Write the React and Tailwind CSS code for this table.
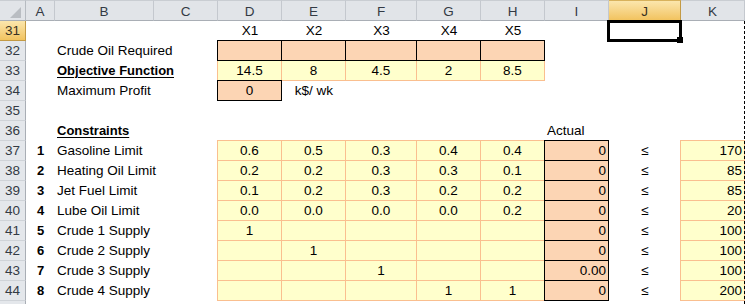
const COLS = ["A", "B", "C", "D", "E", "F", "G", "H", "I", "J", "K"];

const CONSTRAINTS = [
  { n: 1, name: "Gasoline Limit", vals: ["0.6", "0.5", "0.3", "0.4", "0.4"], actual: "0", limit: "170" },
  { n: 2, name: "Heating Oil Limit", vals: ["0.2", "0.2", "0.3", "0.3", "0.1"], actual: "0", limit: "85" },
  { n: 3, name: "Jet Fuel Limit", vals: ["0.1", "0.2", "0.3", "0.2", "0.2"], actual: "0", limit: "85" },
  { n: 4, name: "Lube Oil Limit", vals: ["0.0", "0.0", "0.0", "0.0", "0.2"], actual: "0", limit: "20" },
  { n: 5, name: "Crude 1 Supply", vals: ["1", "", "", "", ""], actual: "0", limit: "100" },
  { n: 6, name: "Crude 2 Supply", vals: ["", "1", "", "", ""], actual: "0", limit: "100" },
  { n: 7, name: "Crude 3 Supply", vals: ["", "", "1", "", ""], actual: "0.00", limit: "100" },
  { n: 8, name: "Crude 4 Supply", vals: ["", "", "", "1", "1"], actual: "0", limit: "200" },
];

// cell fills
const STYLES = {
  none: "",
  peach: "bg-[#fcd5b4] border border-black -mt-px -ml-px",
  yellow: "bg-[#ffffcc] border border-[#fabf8f] -mt-px -ml-px",
  yellowOpen: "bg-[#ffffcc] border-x border-b border-[#fabf8f] -ml-px",
};

const ALIGN = {
  left: "text-left pl-[2px]",
  center: "text-center",
  right: "text-right pr-[2px]",
};

const c = (t = "", s = "none", a = "center", extra = "") => ({ t, s, a, extra });
const blank = () => c();

function buildRows() {
  const rows = [];
  const empty = () => COLS.map(() => blank());

  // 31
  const r31 = empty();
  ["X1", "X2", "X3", "X4", "X5"].forEach((x, i) => (r31[3 + i] = c(x)));
  rows.push({ n: 31, cells: r31 });

  // 32
  const r32 = empty();
  r32[1] = c("Crude Oil Required", "none", "left");
  for (let i = 3; i <= 7; i++) r32[i] = c("", "peach");
  rows.push({ n: 32, cells: r32 });

  // 33
  const r33 = empty();
  r33[1] = c("Objective Function", "none", "left", "font-bold text-[13px] underline decoration-1 underline-offset-[2px]");
  ["14.5", "8", "4.5", "2", "8.5"].forEach((v, i) => (r33[3 + i] = c(v, "yellowOpen")));
  rows.push({ n: 33, cells: r33 });

  // 34
  const r34 = empty();
  r34[1] = c("Maximum Profit", "none", "left");
  r34[3] = c("0", "peach");
  r34[4] = c("k$/ wk");
  rows.push({ n: 34, cells: r34 });

  rows.push({ n: 35, cells: empty() });

  // 36
  const r36 = empty();
  r36[1] = c("Constraints", "none", "left", "font-bold text-[13px] underline decoration-1 underline-offset-[2px]");
  r36[8] = c("Actual", "none", "left");
  rows.push({ n: 36, cells: r36 });

  CONSTRAINTS.forEach((k, idx) => {
    const r = empty();
    r[0] = c(String(k.n), "none", "center", "font-bold text-[13px]");
    r[1] = c(k.name, "none", "left");
    k.vals.forEach((v, i) => (r[3 + i] = c(v, "yellow")));
    r[8] = c(k.actual, "peach", "right");
    r[9] = c("≤");
    r[10] = c(k.limit, "yellow", "right");
    rows.push({ n: 37 + idx, cells: r });
  });

  // last row only peeks in at the bottom edge, no label visible
  rows.push({ n: 45, cells: empty(), hideLabel: true });
  return rows;
}

function Cell({ cell }) {
  return (
    <div className={`min-w-0 whitespace-nowrap leading-[19px] text-black ${STYLES[cell.s]} ${ALIGN[cell.a]} ${cell.extra}`}>
      {cell.t}
    </div>
  );
}

export default function App() {
  const rows = buildRows();

  return (
    <div className="relative w-[746px] h-[304px] overflow-hidden bg-white font-['Liberation_Sans',Arial,sans-serif] text-[13.5px]">
      <div className="grid grid-cols-[26px_29px_99px_64px_64px_64px_71px_64px_64px_64px_72px_64px] grid-rows-[21px_repeat(15,20px)]">
        {/* corner */}
        <div className="relative bg-[#e1e4e8] border-t border-t-[#c9cdd2] border-r border-r-[#b6bbc1] border-b border-b-[#a9aeb5]">
          <svg className="absolute left-[10px] top-[6px]" width="11" height="11" viewBox="0 0 11 11">
            <polygon points="11,0 11,11 0,11" fill="#b9bdc2" />
          </svg>
        </div>

        {COLS.map((col) =>
          col === "J" ? (
            <div
              key={col}
              className="bg-linear-to-b from-[#fbe6ac] to-[#f2c35e] border-t border-t-[#d8b25c] border-r border-r-[#c39a45] border-b border-b-[#c39a45] text-center leading-[19px] pt-px text-[#3a3222]"
            >
              {col}
            </div>
          ) : (
            <div
              key={col}
              className="bg-[#e1e4e8] border-t border-t-[#c9cdd2] border-r border-r-[#c4c8ce] border-b border-b-[#a9aeb5] text-center leading-[19px] pt-px text-[#333a44]"
            >
              {col}
            </div>
          )
        )}

        {rows.map((row) => [
          <div
            key={`h${row.n}`}
            className={
              row.n === 31
                ? "bg-linear-to-b from-[#fbe6ac] to-[#f2c35e] border-r border-r-[#c39a45] border-b border-b-[#c39a45] text-center leading-[19px] text-[#3a3222]"
                : "bg-[#e4e7eb] border-r border-r-[#a9aeb5] border-b border-b-[#cfd3d8] text-center leading-[19px] text-[#333a44]"
            }
          >
            {row.hideLabel ? "" : row.n}
          </div>,
          ...row.cells.map((cell, i) => <Cell key={`${row.n}-${i}`} cell={cell} />),
        ])}
      </div>

      {/* active cell J31 */}
      <div className="absolute left-[607px] top-[20px] w-[75px] h-[22px] border-[3px] border-black" />
      <div className="absolute left-[677px] top-[37px] w-[6px] h-[6px] bg-black" />

      {/* page break */}
      <div className="absolute left-[744px] top-[21px] bottom-0 border-l border-dashed border-black" />
    </div>
  );
}
